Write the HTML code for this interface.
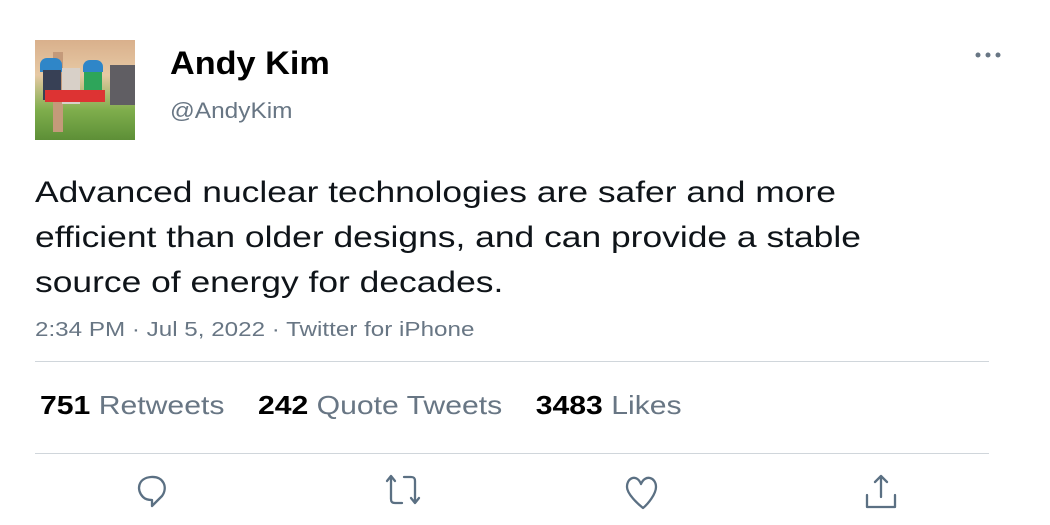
<!DOCTYPE html>
<html><head><style>
body{margin:0;width:1050px;height:525px;background:#fff;font-family:"Liberation Sans",Arial,sans-serif;position:relative;overflow:hidden}
.a{position:absolute;transform-origin:left top;white-space:nowrap}
.g{color:#687684}
</style></head><body>
<div class="a" style="left:35px;top:40px;width:100px;height:100px;background:linear-gradient(#d9b08c 0,#e7c9a4 35%,#7fae4c 70%,#5d8f37 100%)">
 <div class="a" style="left:18px;top:12px;width:10px;height:80px;background:#c49a7a"></div>
 <div class="a" style="left:5px;top:18px;width:22px;height:14px;border-radius:7px 7px 0 0;background:#2f86c8"></div>
 <div class="a" style="left:8px;top:30px;width:18px;height:30px;background:#374055"></div>
 <div class="a" style="left:27px;top:28px;width:18px;height:36px;background:#d8d0c8"></div>
 <div class="a" style="left:48px;top:20px;width:20px;height:12px;border-radius:7px 7px 0 0;background:#2f86c8"></div>
 <div class="a" style="left:49px;top:32px;width:18px;height:26px;background:#2ea55a"></div>
 <div class="a" style="left:75px;top:25px;width:25px;height:40px;background:#605e63"></div>
 <div class="a" style="left:10px;top:50px;width:60px;height:12px;background:#d33"></div>
</div>
<div class="a" style="left:170px;top:45px;font-size:32px;font-weight:bold;color:#000;transform:scaleX(1.07)">Andy Kim</div>
<div class="a g" style="left:170px;top:98px;font-size:22px;transform:scaleX(1.11)">@AndyKim</div>
<svg class="a" style="left:974px;top:50px" width="30" height="10" fill="#687684"><circle cx="4" cy="5" r="2.5"/><circle cx="14" cy="5" r="2.5"/><circle cx="24" cy="5" r="2.5"/></svg>
<div class="a" style="left:35px;top:170px;font-size:30px;line-height:45px;color:#0f1419;transform:scaleX(1.18)">Advanced nuclear technologies are safer and more<br>efficient than older designs, and can provide a stable<br>source of energy for decades.</div>
<div class="a g" style="left:35px;top:319px;font-size:20px;transform:scaleX(1.21)">2:34 PM · Jul 5, 2022 · Twitter for iPhone</div>
<div class="a" style="left:35px;top:361px;width:954px;height:1px;background:#d0d6db"></div>
<div class="a" style="left:40px;top:390px;font-size:26px;color:#687684;transform:scaleX(1.16)"><b style="color:#000">751</b> Retweets&nbsp;&nbsp;&nbsp; <b style="color:#000">242</b> Quote Tweets&nbsp;&nbsp;&nbsp; <b style="color:#000">3483</b> Likes</div>
<div class="a" style="left:35px;top:453px;width:954px;height:1px;background:#d0d6db"></div>
<svg class="a" style="left:0;top:470px" width="1050" height="50" fill="none" stroke="#5b7083" stroke-width="2.3" stroke-linecap="round" stroke-linejoin="round">
 <path d="M143 27 C136 20 138 8 151 7 C164 6 168 18 162 26 L152 36 L152 30 C148 30 145 29 143 27Z"/>
 <path d="M387 11 L391 6 L395 11 M391 6 V29 C391 32 392 33 395 33 H402 M404 7 H411 C414 7 415 8 415 11 V33 M411 28 L415 33 L419 28"/>
 <path d="M641 14 C645 4 656 7 656 17 C656 24 648 34 643 38 C638 34 627 24 627 17 C627 7 637 4 641 14Z"/>
 <path d="M881 6 V27 M875 12 L881 6 L887 12 M867 25 V37 H895 V25"/>
</svg>
</body></html>
